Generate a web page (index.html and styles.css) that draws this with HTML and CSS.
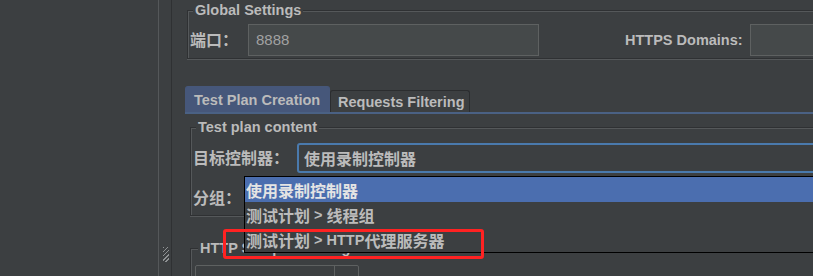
FILE: index.html
```html
<!DOCTYPE html>
<html lang="zh-CN">
<head>
<meta charset="utf-8">
<title>HTTP代理服务器</title>
<link rel="stylesheet" href="styles.css">
</head>
<body>
<div class="app">
  <aside class="tree"></aside>
  <div class="divider"><div class="grip"></div></div>
  <main class="main">
    <fieldset class="group global">
      <legend>Global Settings</legend>
      <div class="row">
        <span class="lbl port-lbl"><span class="zh">端口：</span></span>
        <div class="field port">8888</div>
        <span class="lbl https">HTTPS Domains:</span>
        <div class="field domains"></div>
      </div>
    </fieldset>
    <div class="tabs">
      <div class="tab active">Test Plan Creation</div>
      <div class="tab other">Requests Filtering</div>
    </div>
    <div class="panel">
      <fieldset class="group plan">
        <legend>Test plan content</legend>
        <div class="row">
          <span class="lbl ctl-lbl"><span class="zh">目标控制器：</span></span>
          <div class="combo focus"><span class="zh">使用录制控制器</span></div>
        </div>
        <div class="row row2">
          <span class="lbl ctl-lbl"><span class="zh">分组：</span></span>
          <div class="combo"></div>
        </div>
      </fieldset>
      <fieldset class="group sampler">
        <legend>HTTP Sampler settings</legend>
        <div class="prefix"><span class="prefix-text">Prefix</span><span class="arrow"></span></div>
      </fieldset>
    </div>
  </main>
</div>
<div class="popup">
  <div class="item sel"><span class="zh">使用录制控制器</span></div>
  <div class="item"><span class="zh">测试计划</span>&nbsp;&gt;&nbsp;<span class="zh">线程组</span></div>
  <div class="item"><span class="zh">测试计划</span>&nbsp;&gt;&nbsp;HTTP<span class="zh">代理服务器</span></div>
</div>
<div class="annot"></div>
</body>
</html>
```
FILE: styles.css
```css
* { box-sizing: border-box; }
html, body { margin: 0; padding: 0; }
body {
  width: 813px;
  height: 276px;
  overflow: hidden;
  position: relative;
  background: #3c3f41;
  color: #bbbbbb;
  font-family: "Liberation Sans", "Noto Sans CJK SC", sans-serif;
  font-size: 14.5px;
  font-weight: bold;
  line-height: 18px;
}
.zh {
  font-family: "Noto Sans CJK SC", sans-serif;
  font-size: 16px;
  font-weight: bold;
}
.app { display: flex; height: 276px; }
.tree { width: 158px; flex: none; }
.divider {
  width: 14px;
  flex: none;
  border-left: 1px solid #55585a;
  border-right: 1px solid #2f3133;
  display: flex;
  flex-direction: column;
  align-items: center;
}
.grip {
  margin-top: 247px;
  margin-left: 2px;
  width: 6px;
  height: 15px;
  background: repeating-linear-gradient(135deg, #8f9294 0 1px, transparent 1px 3px);
}
.main {
  flex: 1;
  min-width: 0;
  padding: 1px 0 0 13px;
  overflow: hidden;
}
.group {
  margin: 0 -20px 0 2px;
  min-width: 0;
  border: 1px solid #2f3133;
  box-shadow: inset 1px 1px 0 #55585a, 0 1px 0 #55585a;
}
.group legend {
  margin-left: 3px;
  padding: 0 2px;
  line-height: 18px;
  background: #3c3f41;
}
.global { padding: 5px 0 2px 2px; }
.row { display: flex; align-items: center; }
.lbl { flex: none; white-space: nowrap; }
.port-lbl { width: 58px; }
.field {
  height: 32px;
  flex: none;
  background: #45494a;
  border: 1px solid #5e6161;
  display: flex;
  align-items: center;
  padding-left: 7px;
  font-weight: normal;
  font-size: 15px;
  color: #a2a2a2;
}
.port { width: 291px; }
.https { margin-left: 86px; }
.domains { margin-left: 7px; width: 120px; }

.tabs {
  display: flex;
  align-items: flex-end;
  margin-top: 27px;
  height: 26px;
}
.tab {
  height: 22px;
  padding: 0 8px;
  display: flex;
  align-items: center;
  white-space: nowrap;
  border: 1px solid #2b2d2f;
  border-bottom: none;
  border-radius: 3px 3px 0 0;
}
.tab.active {
  width: 145px;
  height: 26px;
  background: #46577a;
  border-color: #46577a;
  border-radius: 3px 3px 0 0;
}
.tab.other { width: 140px; padding-left: 7px; }
.panel {
  border-top: 2px solid #4a6184;
  padding: 4px 0 0 3px;
}
.plan { padding: 7px 0 2px 2px; }
.ctl-lbl { width: 104px; }
.combo {
  flex: 1;
  height: 30px;
  border: 1px solid #5e6161;
  border-radius: 3px;
  background: #3c3f41;
  display: flex;
  align-items: center;
  padding-left: 6px;
}
.combo.focus {
  border: 2px solid #4a7aad;
  padding-left: 5px;
}
.row2 { margin-top: 10px; }
.sampler { margin-top: 23px; padding: 8px 0 4px 4px; }
.prefix {
  width: 164px;
  height: 28px;
  border: 1px solid #5e6161;
  border-radius: 2px;
  display: flex;
  align-items: center;
}
.prefix-text { flex: 1; padding-left: 5px; padding-top: 8px; }
.arrow { width: 24px; height: 100%; border-left: 1px solid #5e6161; }

.popup {
  position: absolute;
  left: 244px;
  top: 176px;
  width: 620px;
  border: 1px solid #000;
  background: #3c3f41;
}
.item {
  height: 25px;
  padding-left: 1px;
  display: flex;
  align-items: center;
  white-space: nowrap;
}
.item.sel { background: #4b6eaf; color: #e4e4e4; }
.annot {
  position: absolute;
  left: 223px;
  top: 229px;
  width: 261px;
  height: 30px;
  border: 3px solid #ff2222;
  border-radius: 3px;
}
```
